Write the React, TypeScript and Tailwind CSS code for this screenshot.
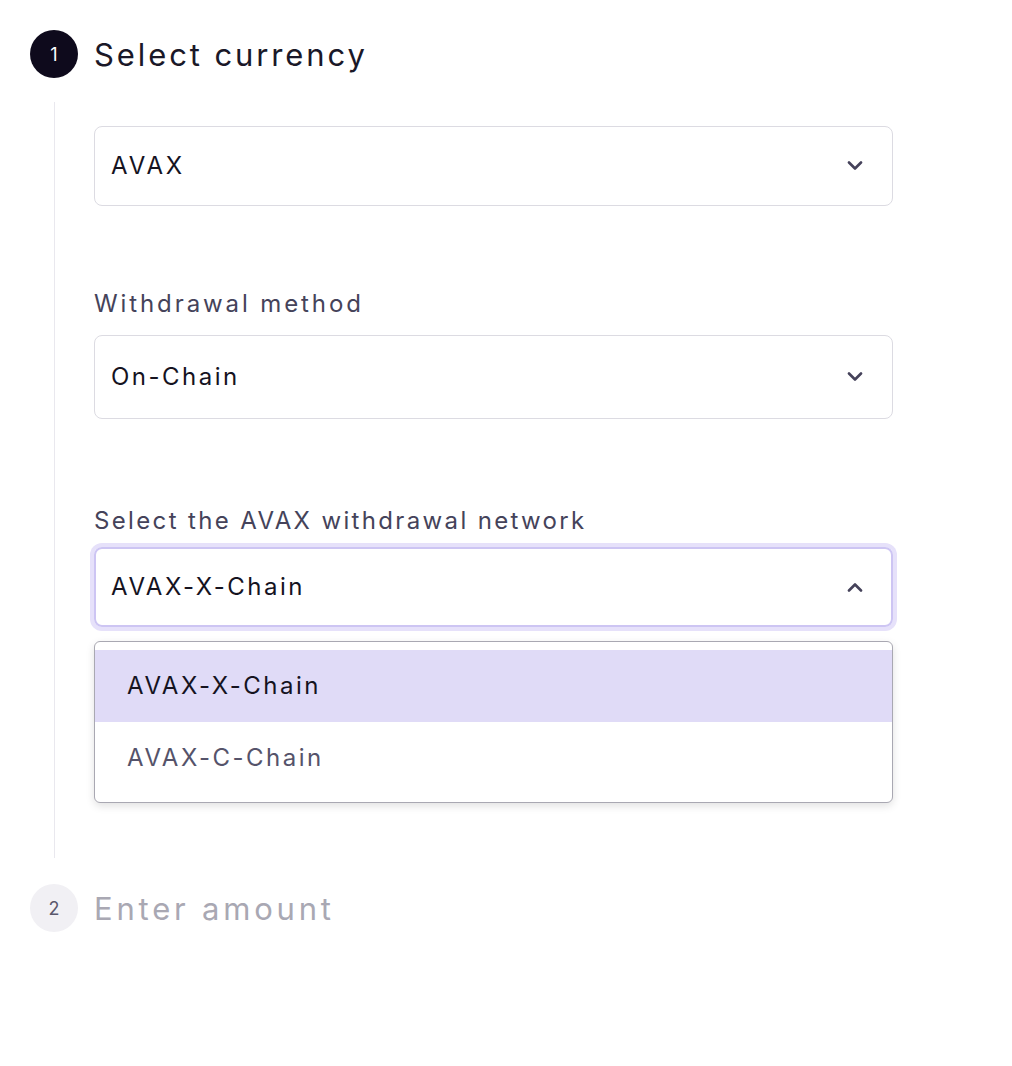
import React from "react";

const font = { fontFamily: "Inter, 'Noto Sans', sans-serif" };

function Chevron({ up = false }: { up?: boolean }) {
  return (
    <svg width="16" height="10" viewBox="0 0 16 10" fill="none" className="shrink-0">
      <path
        d={up ? "M2 8.5 L8 2.5 L14 8.5" : "M2 1.5 L8 7.5 L14 1.5"}
        stroke="#45425a"
        strokeWidth="2.6"
        strokeLinecap="round"
        strokeLinejoin="round"
      />
    </svg>
  );
}

export default function App() {
  return (
    <div className="min-h-[1066px] w-[1012px] bg-white pl-[30px] pt-[30px]" style={font}>
      {/* Step 1 header */}
      <div className="flex items-center gap-4">
        <div className="flex h-12 w-12 items-center justify-center rounded-full bg-[#0e0a1c] text-[18px] text-white">
          1
        </div>
        <h1 className="text-[31px] leading-none tracking-[2.9px] text-[#1a1828]">Select currency</h1>
      </div>

      {/* Step 1 body */}
      <div className="ml-6 mt-6 h-[756px] border-l border-[#e9e8ee] pl-[39px] pt-6">
        <div className="w-[799px]">
          <div className="flex h-20 items-center justify-between rounded-lg border border-[#dcdbe2] px-4">
            <span className="text-[24px] tracking-[2.8px] text-[#15131f]">AVAX</span>
            <span className="pr-[13px]"><Chevron /></span>
          </div>

          <div className="mt-[86px] text-[24px] leading-none tracking-[2.9px] text-[#45435a]">Withdrawal method</div>
          <div className="mt-[19px] flex h-[84px] items-center justify-between rounded-lg border border-[#dcdbe2] px-4">
            <span className="text-[24px] tracking-[2.5px] text-[#15131f]">On-Chain</span>
            <span className="pr-[13px]"><Chevron /></span>
          </div>

          <div className="mt-[90px] text-[24px] leading-none tracking-[2.35px] text-[#45435a]">Select the AVAX withdrawal network</div>
          <div className="relative mt-[14px]">
            <div className="flex h-20 items-center justify-between rounded-lg border-2 border-[#cdc5f3] px-[15px] ring-4 ring-[#e6e1fa]">
              <span className="text-[24px] tracking-[2.5px] text-[#15131f]">AVAX-X-Chain</span>
              <span className="pr-[13px]"><Chevron up /></span>
            </div>
            <div className="absolute left-0 right-0 top-[94px] rounded-md border border-[#a9a8b2] bg-white py-2 shadow-[0_3px_8px_rgba(0,0,0,0.12)]">
              <div className="flex h-[72px] items-center bg-[#e0dbf7] pl-8 text-[24px] tracking-[2.5px] text-[#15131f]">AVAX-X-Chain</div>
              <div className="flex h-[72px] items-center pl-8 text-[24px] tracking-[2.5px] text-[#55536a]">AVAX-C-Chain</div>
            </div>
          </div>
        </div>
      </div>

      {/* Step 2 header */}
      <div className="mt-[26px] flex items-center gap-4">
        <div className="flex h-12 w-12 items-center justify-center rounded-full bg-[#f1f0f4] text-[18px] text-[#5a586c]">
          2
        </div>
        <h2 className="text-[31px] leading-none tracking-[3.8px] text-[#a9a8b3]">Enter amount</h2>
      </div>
    </div>
  );
}
